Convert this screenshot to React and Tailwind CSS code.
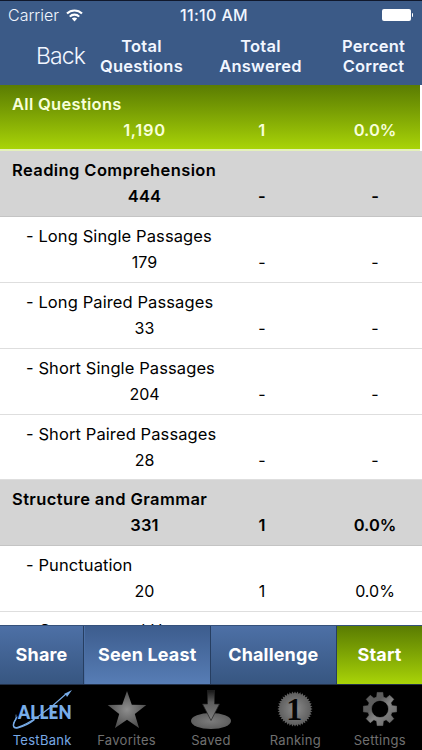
import React from "react";

const rows = [
  { name: "Reading Comprehension", total: "444", answered: "-", correct: "-", group: true },
  { name: "- Long Single Passages", total: "179", answered: "-", correct: "-" },
  { name: "- Long Paired Passages", total: "33", answered: "-", correct: "-" },
  { name: "- Short Single Passages", total: "204", answered: "-", correct: "-" },
  { name: "- Short Paired Passages", total: "28", answered: "-", correct: "-" },
  { name: "Structure and Grammar", total: "331", answered: "1", correct: "0.0%", group: true },
  { name: "- Punctuation", total: "20", answered: "1", correct: "0.0%" },
  { name: "- Grammar and Usage", total: "", answered: "", correct: "", tight: true },
];

function Values({ row }) {
  return (
    <div className="grid grid-cols-[86px_117px_118px_101px] text-center">
      <span />
      <span>{row.total}</span>
      <span>{row.answered}</span>
      <span className="pr-[6px] pl-[13px] tracking-normal">{row.correct}</span>
    </div>
  );
}

function Row({ row }) {
  const look = row.group
    ? "bg-[#d4d4d4] border-[#c4c4c4] font-semibold"
    : "bg-white border-[#dedede]";
  return (
    <div className={`h-[65.9px] shrink-0 border-b text-[16px] leading-[26px] text-black ${row.tight ? "pt-[5px]" : "pt-[6px]"} ${look}`}>
      <div className={row.group ? "pl-[12px] text-[16.5px] tracking-[0.4px]" : "pl-[26px] text-[16.5px] tracking-[0.1px]"}>{row.name}</div>
      <div className={row.group ? "text-[16.5px] tracking-[0.2px]" : "text-[16px]"}><Values row={row} /></div>
    </div>
  );
}

function AllenIcon() {
  return (
    <svg width="62" height="42" viewBox="0 0 62 42" className="overflow-visible">
      <g fill="none" stroke="#78ade9" strokeLinecap="round">
        <path d="M6 27C1 34 1 38 6 37.500C17 35 38 20 55 4" strokeWidth="1.1" />
        <path d="M5 29C1 36 2 39 7 37.800C12 36.500 18 34 23 30" strokeWidth="1.3" />
        <path d="M5 25v4" strokeWidth=".7" />
      </g>
      <path d="M61 0l-8 4 2 1 1 2z" fill="#78ade9" />
      <text x="7" y="29" textLength="54" lengthAdjust="spacingAndGlyphs" fontFamily="Lato, sans-serif" fontWeight="800" fontSize="18.5" fill="#78ade9">ALLEN</text>
    </svg>
  );
}

function StarIcon() {
  return (
    <svg width="40" height="42" viewBox="0 0 40 42">
      <defs><radialGradient id="star"><stop stopColor="#8e8e8e" /><stop offset="1" stopColor="#505050" /></radialGradient></defs>
      <path d="M20 1l4.800 13.700 14.500.300-11.500 8.900 4.200 14L20 29.700 8 37.900l4.200-14L.7 15l14.500-.3z" fill="url(#star)" />
    </svg>
  );
}

function SavedIcon() {
  return (
    <svg width="42" height="42" viewBox="0 0 42 42">
      <defs>
        <linearGradient id="arrow" x2="0" y2="1"><stop stopColor="#141414" /><stop offset=".4" stopColor="#5c5c5c" /><stop offset="1" stopColor="#808080" /></linearGradient>
        <radialGradient id="disc"><stop stopColor="#7c7c7c" /><stop offset="1" stopColor="#5f5f5f" /></radialGradient>
      </defs>
      <ellipse cx="21" cy="31" rx="20" ry="8" fill="url(#disc)" />
      <path d="M17.500 0h7v14h5L21 30.500 12.500 14h5z" fill="url(#arrow)" stroke="#222" strokeWidth=".7" />
    </svg>
  );
}

const sealPoints = Array.from({ length: 80 }, (_, i) => {
  const angle = (i * Math.PI) / 40;
  const r = i % 2 ? 15.5 : 17.6;
  return `${21 + r * Math.cos(angle)},${19 + r * Math.sin(angle)}`;
}).join(" ");

function RankingIcon() {
  return (
    <svg width="42" height="42" viewBox="0 0 42 42" className="opacity-[0.999]">
      <defs><radialGradient id="seal"><stop stopColor="#8c8c8c" /><stop offset="1" stopColor="#5b5b5b" /></radialGradient></defs>
      <polygon points={sealPoints} fill="url(#seal)" />
      <text x="20.5" y="29.5" textAnchor="middle" fontFamily="Liberation Serif, serif" fontWeight="700" fontSize="32" fill="#050505">1</text>
    </svg>
  );
}

const gearPoints = Array.from({ length: 8 }, (_, tooth) =>
  [[-0.27, 12.4], [-0.17, 16.8], [0.17, 16.8], [0.27, 12.4]].map(([offset, r]) => {
    const angle = (tooth * Math.PI) / 4 + offset;
    return `${21 + r * Math.cos(angle)} ${19 + r * Math.sin(angle)}`;
  })
).flat().join("L");

function GearIcon() {
  return (
    <svg width="42" height="42" viewBox="0 0 42 42">
      <defs><linearGradient id="gear" x2="1" y2="1"><stop stopColor="#606060" /><stop offset=".35" stopColor="#5c5c5c" /><stop offset=".55" stopColor="#858585" /><stop offset="1" stopColor="#626262" /></linearGradient></defs>
      <path d={`M${gearPoints}ZM21 10.400a8.600 8.600 0 1 0 0 17.200a8.600 8.600 0 0 0 0-17.200z`} fill="url(#gear)" fillRule="evenodd" stroke="url(#gear)" strokeWidth=".6" strokeLinejoin="round" />
    </svg>
  );
}

const tabs = [
  ["TestBank", AllenIcon],
  ["Favorites", StarIcon],
  ["Saved", SavedIcon],
  ["Ranking", RankingIcon],
  ["Settings", GearIcon],
];

export default function App() {
  return (
    <div className="flex h-[750px] w-[422px] flex-col overflow-hidden bg-white font-['Inter',sans-serif]">
      <header className="h-[85px] shrink-0 border-t border-[#10182c] bg-[#3b5a87] text-[#f1f6ff]">
        <div className="grid h-[28px] grid-cols-3 items-center">
          <div className="flex items-center gap-[7px] pl-[8px] text-[16px] font-light">
            Carrier
            <svg width="17" height="13" viewBox="0 0 17 13" fill="none" stroke="white" strokeWidth="2.1">
              <path d="M1 4.5C5 .4 12 .4 16 4.5M3.8 7.6c2.5-2.7 6.9-2.7 9.4 0" />
              <path d="M5.8 9.6c1.7-1.4 3.7-1.4 5.4 0L8.5 12.5z" fill="white" stroke="none" />
            </svg>
          </div>
          <div className="pl-[6px] text-center text-[16px] font-medium tracking-[0.35px] whitespace-nowrap">11:10 AM</div>
          <div className="flex items-center justify-end gap-px pr-[9px]">
            <div className="h-[12px] w-[29px] rounded-[2px] bg-white" />
            <div className="h-[4px] w-[1.5px] rounded-r bg-white" />
          </div>
        </div>
        <div className="grid grid-cols-[84px_115px_123px_100px] pt-[7px] text-center text-[16.5px] leading-[20px] font-semibold tracking-[0.2px]">
          <span className="pt-[9px] pl-[36px] text-left text-[23px] leading-[23px] font-light tracking-[-0.9px]">Back</span>
          <span>Total<br />Questions</span>
          <span>Total<br />Answered</span>
          <span className="pl-[3px]">Percent<br />Correct</span>
        </div>
      </header>

      <main className="flex min-h-0 flex-1 flex-col overflow-hidden">
        <div className="mr-[2px] h-[66px] shrink-0 border-b-2 border-[#e5f1bb] bg-linear-to-b from-[#5a7c02] to-[#a9d408] pt-[6px] text-[16.5px] leading-[26px] font-semibold text-[#f8ffda]">
          <div className="pl-[12px] tracking-[0.3px]">All Questions</div>
          <div className="tracking-[0.7px]"><Values row={{ total: "1,190", answered: "1", correct: "0.0%" }} /></div>
        </div>
        {rows.map((row) => <Row key={row.name} row={row} />)}
      </main>

      <div className="grid h-[60px] shrink-0 grid-cols-[84px_126.5px_126.5px_85px] border-t border-b border-t-[#35517b] border-b-[#223047] text-center text-[18px] leading-[58px] font-bold tracking-[0.15px] text-white">
        <div className="border-r border-[#263e61] bg-linear-to-b from-[#4d70a6] to-[#375681]">Share</div>
        <div className="border-r border-l border-r-[#263e61] border-l-[#4c70a6] bg-linear-to-b from-[#3d5d8e] to-[#577db5]">Seen Least</div>
        <div className="border-r border-[#263e61] bg-linear-to-b from-[#4d70a6] to-[#375681]">Challenge</div>
        <div className="bg-linear-to-b from-[#5a7c02] to-[#a9d408]">Start</div>
      </div>

      <nav className="grid h-[65px] shrink-0 grid-cols-5 bg-black">
        {tabs.map(([label, Icon], index) => (
          <div key={label} className={`flex flex-col items-center pt-[5px] text-[13px] leading-[16px] tracking-[0.3px] ${index === 0 ? "text-[#78a9e5]" : "text-[#707070]"}`}>
            <Icon />
            <span>{label}</span>
          </div>
        ))}
      </nav>
    </div>
  );
}
